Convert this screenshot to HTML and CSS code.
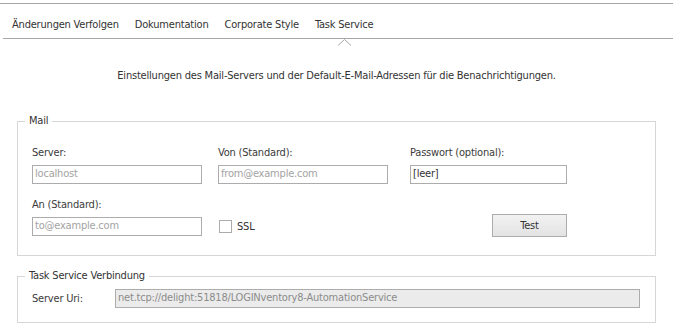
FILE: index.html
```html
<!DOCTYPE html>
<html lang="de">
<head>
<meta charset="utf-8">
<title>Task Service</title>
<link rel="stylesheet" href="styles.css">
</head>
<body>
<div class="page">
  <div class="tabbar">
    <div class="tab">Änderungen Verfolgen</div>
    <div class="tab">Dokumentation</div>
    <div class="tab">Corporate Style</div>
    <div class="tab active">Task Service
      <svg class="notch" width="13" height="7" viewBox="0 0 13 7"><polyline points="0,6.5 6.5,0.5 13,6.5" fill="#fff" stroke="#a8a8a8" stroke-width="1"/></svg>
    </div>
  </div>
  <p class="intro">Einstellungen des Mail-Servers und der Default-E-Mail-Adressen für die Benachrichtigungen.</p>

  <fieldset class="group mail">
    <legend>Mail</legend>
    <div class="mailgrid">
      <div class="field c1">
        <label class="lbl">Server:</label>
        <div class="input ph">localhost</div>
      </div>
      <div class="field c2">
        <label class="lbl">Von (Standard):</label>
        <div class="input ph">from@example.com</div>
      </div>
      <div class="field c3">
        <label class="lbl">Passwort (optional):</label>
        <div class="input val">[leer]</div>
      </div>
      <div class="field c1">
        <label class="lbl">An (Standard):</label>
        <div class="input ph">to@example.com</div>
      </div>
      <div class="sslcell c2">
        <span class="check"></span><span class="ssl">SSL</span>
      </div>
      <div class="btncell c3">
        <div class="btn">Test</div>
      </div>
    </div>
  </fieldset>

  <fieldset class="group task">
    <legend>Task Service Verbindung</legend>
    <div class="urirow">
      <span class="lbl">Server Uri:</span>
      <div class="input uri">net.tcp://delight:51818/LOGINventory8-AutomationService</div>
    </div>
  </fieldset>
</div>
</body>
</html>
```

FILE: styles.css
```css
* { box-sizing: border-box; }
html, body { margin: 0; padding: 0; background: #fff; }
body {
  font-family: "DejaVu Sans Condensed", "DejaVu Sans", sans-serif;
  font-size: 11px;
  line-height: 14px;
  letter-spacing: -0.2px;
  color: #3b3b3b;
}
.page {
  width: 673px;
  margin-top: 3px;
  border-top: 1px solid #a6a6a6;
}
.tabbar {
  display: flex;
  gap: 16px;
  margin-left: 3px;
  width: 670px;
  height: 35px;
  padding: 14px 0 0 9px;
  border-bottom: 1px solid #a6a6a6;
}
.tab {
  position: relative;
  color: #333;
  white-space: nowrap;
}
.notch {
  position: absolute;
  left: 50%;
  margin-left: -6px;
  bottom: -8px;
  display: block;
}
.intro {
  margin: 30px 0 0 0;
  text-align: center;
  color: #333;
}
.group {
  margin: 0 0 0 17px;
  width: 639px;
  padding: 0;
  border: 1px solid #d6d6d6;
}
.group legend {
  margin-left: 7px;
  padding: 0 4px;
  color: #333;
}
.mail { margin-top: 31px; }
.mailgrid {
  display: grid;
  grid-template-columns: 170px 16px 170px 22px 157px;
  row-gap: 14px;
  padding: 18px 0 19px 14px;
}
.c1 { grid-column: 1; }
.c2 { grid-column: 3; }
.c3 { grid-column: 5; }
.field { display: flex; flex-direction: column; gap: 5px; }
.lbl { display: block; }
.input {
  height: 19px;
  border: 1px solid #acacac;
  background: #fff;
  padding: 1px 0 0 2px;
  white-space: nowrap;
  overflow: hidden;
}
.ph { color: #a3a3a3; }
.val { color: #333; }
.sslcell {
  display: flex;
  align-items: center;
  align-self: end;
  height: 19px;
  padding-left: 1px;
  gap: 5px;
}
.check {
  width: 13px;
  height: 13px;
  border: 1px solid #acacac;
  background: #fff;
}
.ssl { color: #333; }
.btncell {
  display: flex;
  justify-content: flex-end;
  align-self: end;
  margin-bottom: -1px;
}
.btn {
  width: 75px;
  height: 23px;
  border: 1px solid #acacac;
  background: linear-gradient(#f2f2f2, #e3e3e3);
  text-align: center;
  line-height: 21px;
  color: #333;
}
.task { margin-top: 13px; }
.urirow {
  display: flex;
  align-items: center;
  padding: 6px 0 14px 14px;
}
.urirow .lbl { width: 83px; }
.uri {
  width: 525px;
  background: #ebebeb;
  color: #8c8c8c;
}
```
